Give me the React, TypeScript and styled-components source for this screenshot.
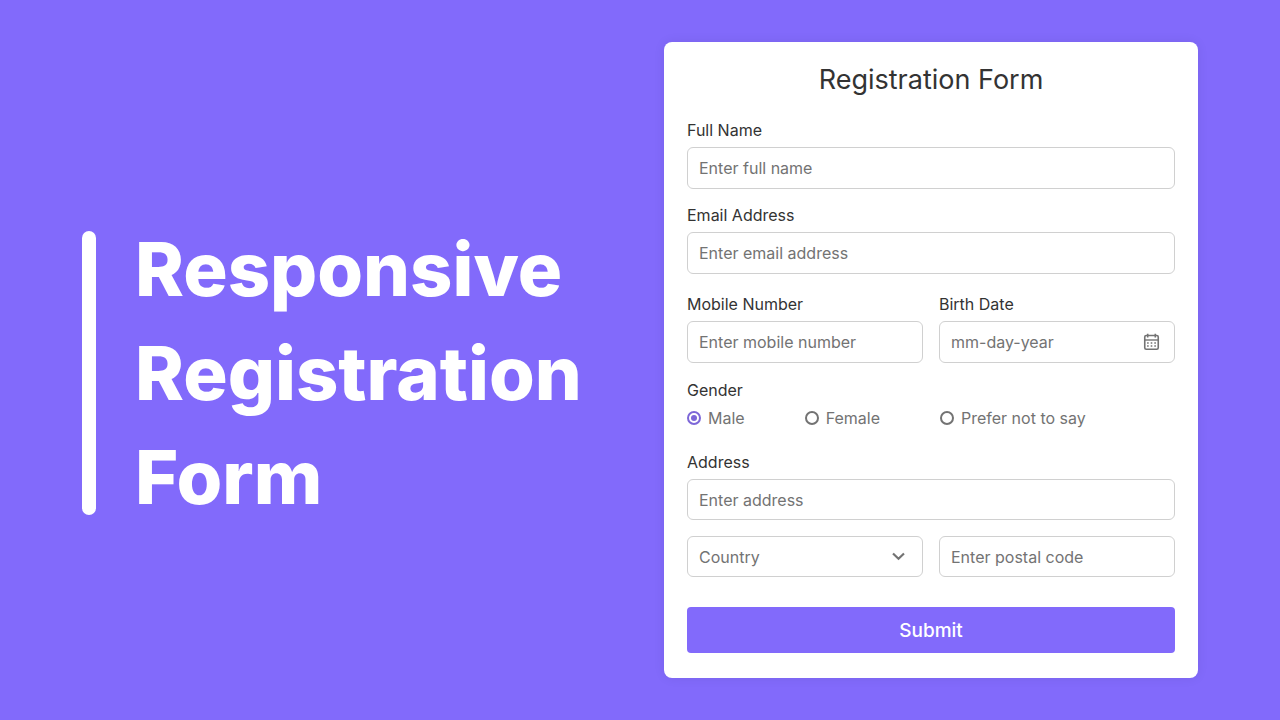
import React from "react";
import styled, { createGlobalStyle } from "styled-components";

const purple = "#826afb";
const ink = "#333333";
const muted = "#737373";
const line = "#d0d0d0";

const GlobalStyle = createGlobalStyle`
  *, *::before, *::after { box-sizing: border-box; }
  body {
    margin: 0;
    background: ${purple};
    font-family: Inter, "Open Sans", "Liberation Sans", sans-serif;
  }
  input, select, button { font: inherit; }
`;

const Page = styled.main`
  min-height: 100vh;
  padding: 32px 82px;
  display: flex;
  align-items: center;
  justify-content: space-between;
  gap: 40px;
  @media (max-width: 1100px) {
    flex-direction: column;
    padding: 32px 20px;
  }
`;

const Hero = styled.section`
  display: flex;
  gap: 39px;
  padding-top: 26px;
`;

const Bar = styled.span`
  width: 14px;
  margin: 14px 0;
  border-radius: 7px;
  background: #fff;
`;

const Headline = styled.h1`
  margin: 0;
  color: #fff;
  font-size: 74px;
  line-height: 104px;
  font-weight: 800;
`;

const HeadlineLine = styled.span`
  display: block;
`;

const Card = styled.section`
  flex: 0 1 534px;
  padding: 20px 23px 25px;
  border-radius: 8px;
  background: #fff;
  box-shadow: 0 0 12px rgba(0, 0, 0, 0.07);
`;

const Title = styled.h2`
  margin: 0 0 20px;
  color: ${ink};
  font-size: 27px;
  line-height: 36px;
  font-weight: 400;
  text-align: center;
`;

const Group = styled.div<{ $gap: number }>`
  display: flex;
  flex-direction: column;
  min-width: 0;
  margin-bottom: ${(p) => p.$gap}px;
`;

const Columns = styled.div`
  display: grid;
  grid-template-columns: 1fr 1fr;
  gap: 16px;
`;

const Label = styled.label`
  margin-bottom: 5px;
  color: ${ink};
  font-size: 16px;
  line-height: 24px;
`;

const Field = styled.input<{ $short?: boolean }>`
  width: 100%;
  height: ${(p) => (p.$short ? 41 : 42)}px;
  padding: 0 11px;
  border: 1px solid ${line};
  border-radius: 6px;
  outline: none;
  background: #fff;
  color: ${muted};
  font-size: 16px;
  &::placeholder { color: ${muted}; opacity: 1; }
  &:focus { border-color: ${purple}; }
`;

const Adorned = styled.div`
  position: relative;
`;

const CalendarButton = styled.button`
  position: absolute;
  top: 12px;
  right: 15px;
  display: flex;
  padding: 0;
  border: 0;
  background: none;
  color: ${muted};
  cursor: pointer;
`;

const Select = styled.select`
  width: 100%;
  height: 41px;
  padding: 0 11px;
  border: 1px solid ${line};
  border-radius: 6px;
  appearance: none;
  background: #fff;
  color: ${muted};
  font-size: 16px;
`;

const Chevron = styled.svg`
  position: absolute;
  top: 16px;
  right: 18px;
  color: ${muted};
  pointer-events: none;
`;

const GenderSet = styled.fieldset`
  margin: 0 0 20px;
  padding: 0;
  border: 0;
`;

const Legend = styled.legend`
  margin-bottom: 4px;
  padding: 0;
  color: ${ink};
  font-size: 16px;
  line-height: 24px;
`;

const Options = styled.div`
  display: flex;
  flex-wrap: wrap;
  column-gap: 60px;
`;

const Option = styled.label`
  display: flex;
  align-items: center;
  gap: 7px;
  color: ${muted};
  font-size: 16px;
  line-height: 24px;
`;

const Radio = styled.input`
  appearance: none;
  display: grid;
  place-content: center;
  width: 14px;
  height: 14px;
  margin: 0;
  border: 2px solid ${muted};
  border-radius: 50%;
  &:checked { border-color: #7d67d8; }
  &:checked::before {
    content: "";
    width: 6px;
    height: 6px;
    border-radius: 50%;
    background: #7d67d8;
  }
`;

const Submit = styled.button`
  width: 100%;
  height: 46px;
  border: 0;
  border-radius: 4px;
  background: ${purple};
  color: #fff;
  font-size: 19px;
  font-weight: 500;
  cursor: pointer;
`;

const CalendarIcon = () => (
  <svg width="17" height="18" viewBox="0 0 17 18" fill="none" stroke="currentColor" aria-hidden="true">
    <rect x="1.75" y="2.5" width="13.5" height="13.7" rx="1.5" strokeWidth="1.6" />
    <path d="M1.75 7h13.5" strokeWidth="1.4" />
    <path d="M4.7 0.8v3.6M12.3 0.8v3.6" strokeWidth="1.6" />
    <path d="M4.1 10h1.6M7.7 10h1.6M11.3 10h1.6M4.1 13h1.6M7.7 13h1.6M11.3 13h1.6" strokeWidth="1.5" />
  </svg>
);

const headline = ["Responsive", "Registration", "Form"];
const genders = ["Male", "Female", "Prefer not to say"];

export default function App() {
  return (
    <>
      <GlobalStyle />
      <Page>
        <Hero>
          <Bar />
          <Headline>
            {headline.map((word) => (
              <HeadlineLine key={word}>{word}</HeadlineLine>
            ))}
          </Headline>
        </Hero>
        <Card>
          <Title>Registration Form</Title>
          <form onSubmit={(e) => e.preventDefault()}>
            <Group $gap={14}>
              <Label htmlFor="name">Full Name</Label>
              <Field id="name" type="text" placeholder="Enter full name" />
            </Group>
            <Group $gap={18}>
              <Label htmlFor="email">Email Address</Label>
              <Field id="email" type="email" placeholder="Enter email address" />
            </Group>
            <Columns>
              <Group $gap={15}>
                <Label htmlFor="mobile">Mobile Number</Label>
                <Field id="mobile" type="tel" placeholder="Enter mobile number" />
              </Group>
              <Group $gap={15}>
                <Label htmlFor="birth">Birth Date</Label>
                <Adorned>
                  <Field id="birth" type="text" placeholder="mm-day-year" />
                  <CalendarButton type="button" aria-label="Choose date">
                    <CalendarIcon />
                  </CalendarButton>
                </Adorned>
              </Group>
            </Columns>
            <GenderSet>
              <Legend>Gender</Legend>
              <Options>
                {genders.map((g, i) => (
                  <Option key={g}>
                    <Radio type="radio" name="gender" value={g} defaultChecked={i === 0} />
                    {g}
                  </Option>
                ))}
              </Options>
            </GenderSet>
            <Group $gap={16}>
              <Label htmlFor="address">Address</Label>
              <Field $short id="address" type="text" placeholder="Enter address" />
            </Group>
            <Columns>
              <Group $gap={30}>
                <Adorned>
                  <Select aria-label="Country" defaultValue="Country">
                    <option>Country</option>
                  </Select>
                  <Chevron width="13" height="9" viewBox="0 0 13 9" fill="none" stroke="currentColor" strokeWidth="2.2" aria-hidden="true">
                    <path d="M1 1.5l5.5 5.2L12 1.5" />
                  </Chevron>
                </Adorned>
              </Group>
              <Group $gap={30}>
                <Field $short type="text" aria-label="Postal code" placeholder="Enter postal code" />
              </Group>
            </Columns>
            <Submit type="submit">Submit</Submit>
          </form>
        </Card>
      </Page>
    </>
  );
}
